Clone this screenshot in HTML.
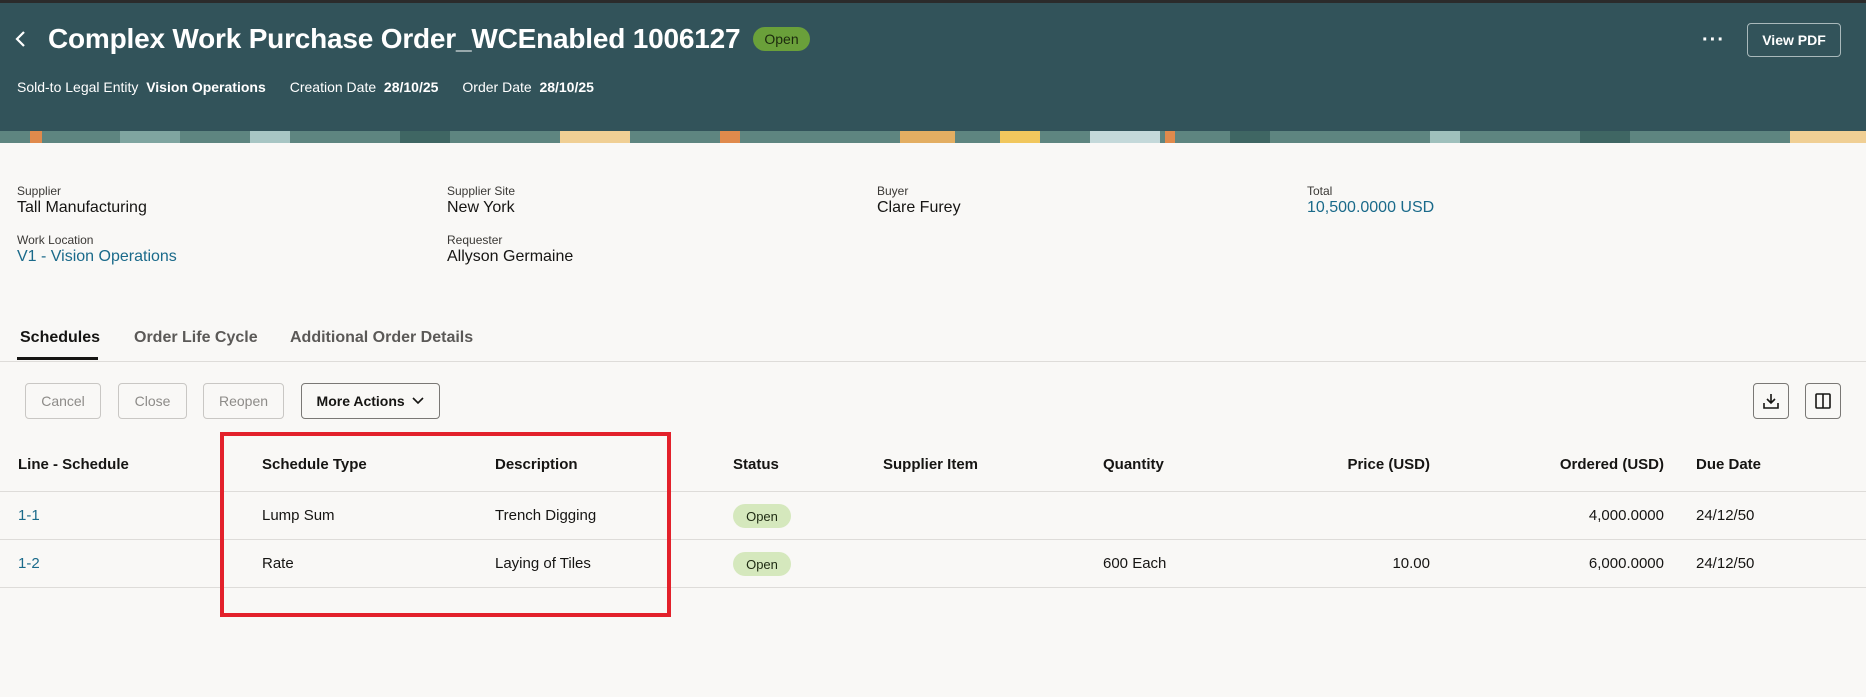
<!DOCTYPE html>
<html><head><meta charset="utf-8"><style>
*{margin:0;padding:0;box-sizing:border-box}
body{width:1866px;height:697px;overflow:hidden;background:#f9f8f6;font-family:"Liberation Sans",sans-serif;color:#161513;position:relative}
.a{position:absolute;white-space:nowrap}
.hdr{position:absolute;left:0;top:0;width:1866px;height:131px;background:#32535a;border-top:3px solid #2b2b2b}
.band{position:absolute;left:0;top:131px;width:1866px;height:12px;background:#5e8580;overflow:hidden}
.band i{position:absolute;top:0;height:12px;display:block}
.lbl{font-size:12px;color:#3a3835}
.val{font-size:16px;color:#161513}
.lnk{color:#1a6a8a}
.btn{position:absolute;top:383px;height:36px;border:1px solid #c9c7c4;border-radius:4px;font-size:14px;color:#8d8b88;display:flex;align-items:center;justify-content:center;background:#f9f8f6}
.th{font-size:15px;font-weight:bold;top:456px}
.td{font-size:15px}
.line{position:absolute;left:0;width:1866px;height:1px;background:#dedcd9}
.badge{position:absolute;width:58px;height:24px;border-radius:12px;background:#d5e8bd;font-size:13px;display:flex;align-items:center;justify-content:center;color:#1e2a12}
</style></head><body>
<div class="hdr"></div>
<div class="band">
<i style="left:30px;width:12px;background:#e08a4c"></i><i style="left:120px;width:60px;background:#7fa5a0"></i><i style="left:250px;width:40px;background:#a8c6c4"></i><i style="left:400px;width:50px;background:#3f6663"></i><i style="left:560px;width:70px;background:#f0cf94"></i><i style="left:720px;width:20px;background:#e08a4c"></i><i style="left:900px;width:55px;background:#e3ae62"></i><i style="left:1000px;width:40px;background:#f1c75d"></i><i style="left:1090px;width:70px;background:#c4d9da"></i><i style="left:1165px;width:10px;background:#e08a4c"></i><i style="left:1230px;width:40px;background:#3f6663"></i><i style="left:1430px;width:30px;background:#9fc0bc"></i><i style="left:1580px;width:50px;background:#3f6663"></i><i style="left:1790px;width:76px;background:#f0cf94"></i>
</div>
<svg class="a" style="left:14px;top:30px" width="14" height="18" viewBox="0 0 14 18"><path d="M10 2 L3 9 L10 16" stroke="#fff" stroke-width="2.2" fill="none"/></svg>
<div class="a" style="left:48px;top:23px;font-size:28px;font-weight:bold;color:#fff;letter-spacing:-0.2px">Complex Work Purchase Order_WCEnabled 1006127</div>
<div class="a" style="left:753px;top:27px;width:57px;height:24px;border-radius:12px;background:#6aa03a;color:#1c2a0e;font-size:14px;display:flex;align-items:center;justify-content:center">Open</div>
<div class="a" style="left:17px;top:79px;font-size:14px;color:#fff">Sold-to Legal Entity&nbsp; <b>Vision Operations</b><span style="margin-left:24px">Creation Date&nbsp; <b>28/10/25</b></span><span style="margin-left:24px">Order Date&nbsp; <b>28/10/25</b></span></div>
<div class="a" style="left:1702px;top:30px;font-size:20px;color:#fff;font-weight:bold;letter-spacing:1px;line-height:20px">···</div>
<div class="a" style="left:1747px;top:23px;width:94px;height:34px;border:1px solid #a9b9bb;border-radius:4px;color:#fff;font-size:14px;font-weight:bold;display:flex;align-items:center;justify-content:center">View PDF</div>

<div class="a lbl" style="left:17px;top:184px">Supplier</div><div class="a val" style="left:17px;top:199px">Tall Manufacturing</div>
<div class="a lbl" style="left:447px;top:184px">Supplier Site</div><div class="a val" style="left:447px;top:199px">New York</div>
<div class="a lbl" style="left:877px;top:184px">Buyer</div><div class="a val" style="left:877px;top:199px">Clare Furey</div>
<div class="a lbl" style="left:1307px;top:184px">Total</div><div class="a val lnk" style="left:1307px;top:199px">10,500.0000 USD</div>
<div class="a lbl" style="left:17px;top:233px">Work Location</div><div class="a val lnk" style="left:17px;top:248px">V1 - Vision Operations</div>
<div class="a lbl" style="left:447px;top:233px">Requester</div><div class="a val" style="left:447px;top:248px">Allyson Germaine</div>

<div class="a" style="left:20px;top:329px;font-size:16px;font-weight:bold">Schedules</div>
<div class="a" style="left:134px;top:329px;font-size:16px;font-weight:bold;color:#5b5957">Order Life Cycle</div>
<div class="a" style="left:290px;top:329px;font-size:16px;font-weight:bold;color:#5b5957">Additional Order Details</div>
<div class="a" style="left:17px;top:357px;width:81px;height:3px;background:#161513"></div>
<div class="line" style="top:361px"></div>

<div class="btn" style="left:25px;width:76px">Cancel</div>
<div class="btn" style="left:118px;width:69px">Close</div>
<div class="btn" style="left:203px;width:81px">Reopen</div>
<div class="btn" style="left:301px;width:139px;border-color:#7a7875;color:#161513;font-weight:bold">More Actions&nbsp;&nbsp;<svg width="12" height="8" viewBox="0 0 12 8"><path d="M1 1 L6 6 L11 1" stroke="#161513" stroke-width="1.6" fill="none"/></svg></div>
<div class="btn" style="left:1753px;width:36px;border-color:#7a7875"><svg width="18" height="18" viewBox="0 0 18 18"><path d="M9 2 V11 M5 7 L9 11 L13 7 M2 11 V16 H16 V11" stroke="#161513" stroke-width="1.6" fill="none"/></svg></div>
<div class="btn" style="left:1805px;width:36px;border-color:#7a7875"><svg width="18" height="18" viewBox="0 0 18 18"><rect x="2" y="2" width="14" height="14" rx="1" stroke="#161513" stroke-width="1.6" fill="none"/><path d="M9 2 V16" stroke="#161513" stroke-width="1.6"/></svg></div>

<div class="a th" style="left:18px">Line - Schedule</div>
<div class="a th" style="left:262px">Schedule Type</div>
<div class="a th" style="left:495px">Description</div>
<div class="a th" style="left:733px">Status</div>
<div class="a th" style="left:883px">Supplier Item</div>
<div class="a th" style="left:1103px">Quantity</div>
<div class="a th" style="right:436px">Price (USD)</div>
<div class="a th" style="right:202px">Ordered (USD)</div>
<div class="a th" style="left:1696px">Due Date</div>
<div class="line" style="top:491px"></div>

<div class="a td lnk" style="left:18px;top:507px">1-1</div>
<div class="a td" style="left:262px;top:507px">Lump Sum</div>
<div class="a td" style="left:495px;top:507px">Trench Digging</div>
<div class="badge" style="left:733px;top:504px">Open</div>
<div class="a td" style="right:202px;top:507px">4,000.0000</div>
<div class="a td" style="left:1696px;top:507px">24/12/50</div>
<div class="line" style="top:539px"></div>

<div class="a td lnk" style="left:18px;top:555px">1-2</div>
<div class="a td" style="left:262px;top:555px">Rate</div>
<div class="a td" style="left:495px;top:555px">Laying of Tiles</div>
<div class="badge" style="left:733px;top:552px">Open</div>
<div class="a td" style="left:1103px;top:555px">600 Each</div>
<div class="a td" style="right:436px;top:555px">10.00</div>
<div class="a td" style="right:202px;top:555px">6,000.0000</div>
<div class="a td" style="left:1696px;top:555px">24/12/50</div>
<div class="line" style="top:587px"></div>

<div class="a" style="left:220px;top:432px;width:451px;height:185px;border:4px solid #e3212b"></div>
</body></html>
